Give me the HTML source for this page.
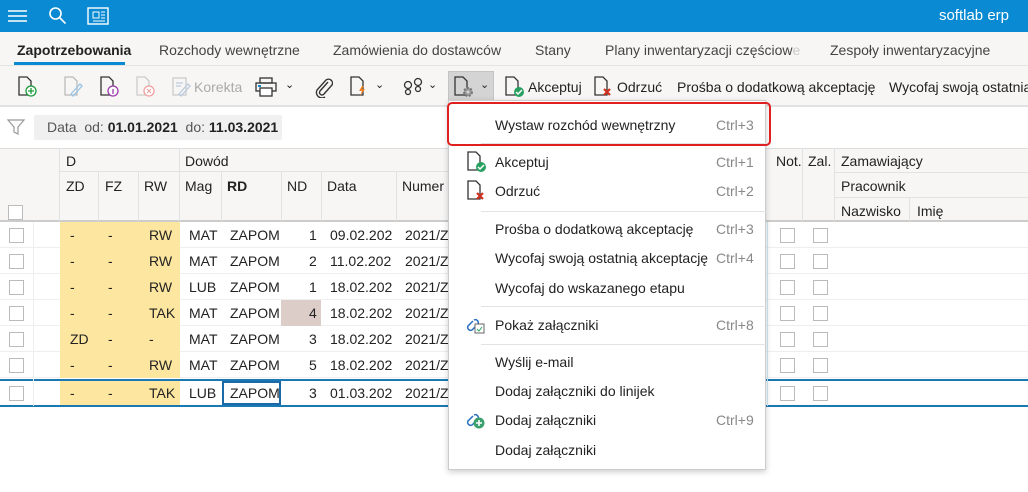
<!DOCTYPE html>
<html><head><meta charset="utf-8"><style>
*{box-sizing:border-box;margin:0;padding:0}
body{width:1028px;height:492px;overflow:hidden;background:#fff;font-family:"Liberation Sans",sans-serif;font-size:14px;color:#222;position:relative}
.a{position:absolute;white-space:nowrap}
.top{left:0;top:0;width:1028px;height:32px;background:#0a8ad2}
.tabs{left:0;top:32px;width:1028px;height:34px;background:#f7f6f5;border-bottom:1px solid #e4e4e4}
.tb{left:0;top:66px;width:1028px;height:41px;background:#f7f6f5;border-bottom:2px solid #e2e2e2}
.hd{left:0;top:148px;width:1028px;height:74px;background:#f7f6f5;border-top:1px solid #ddd;border-bottom:2px solid #ccc}
.cb{position:absolute;width:15px;height:15px;border:1px solid #bbb;background:#fff}
.row{position:absolute;left:0;width:1028px;height:26px;border-bottom:1px solid #eee}
.y{position:absolute;top:0;height:26px;background:#fde6a0}
.c{position:absolute;top:5px}
.menu{left:448px;top:100px;width:318px;height:370px;background:#fff;border:1px solid #ccc;box-shadow:0 2px 6px rgba(0,0,0,.2)}
.mi{position:absolute;left:46px}
.sc{position:absolute;left:267px;color:#888}
.sep{position:absolute;left:32px;width:286px;height:1px;background:#e3e3e3}
.vl{position:absolute;width:1px;background:#e2e2e2}
</style></head><body>
<div class="a top"></div>
<svg class="a" style="left:8px;top:8px" width="20" height="16"><path d="M0 3h19M0 8h19M0 13h19" stroke="#fff" stroke-width="1.6"/></svg>
<svg class="a" style="left:48px;top:6px" width="20" height="20"><circle cx="7.5" cy="7.5" r="5.5" stroke="#fff" stroke-width="1.6" fill="none"/><path d="M11.5 11.5l6 6" stroke="#fff" stroke-width="1.6"/></svg>
<svg class="a" style="left:87px;top:7px" width="22" height="18"><rect x="1" y="1" width="20" height="16" stroke="#fff" fill="none" stroke-width="1.4"/><rect x="6" y="5" width="6" height="6" stroke="#fff" fill="none"/><path d="M14 5h4M14 8h4M14 11h4M6 14h12" stroke="#fff"/></svg>
<div class="a" style="right:19px;top:7px;color:#fff;font-size:15px">softlab erp</div>

<div class="a tabs"></div>
<div class="a" style="left:17px;top:42px;font-weight:bold;color:#222">Zapotrzebowania</div>
<div class="a" style="left:14px;top:62px;width:111px;height:3px;background:#0a8ad2"></div>
<div class="a" style="left:159px;top:42px;color:#444">Rozchody wewnętrzne</div>
<div class="a" style="left:333px;top:42px;color:#444">Zamówienia do dostawców</div>
<div class="a" style="left:535px;top:42px;color:#444">Stany</div>
<div class="a" style="left:605px;top:42px;color:#444">Plany inwentaryzacji częściow<span style="color:#ccc">e</span></div>
<div class="a" style="left:830px;top:42px;color:#444">Zespoły inwentaryzacyjne</div>

<div class="a tb"></div>
<svg class="a" style="left:17px;top:76px" width="24" height="22"><path d="M2 1h8l4 4v14H2z" fill="none" stroke="#333" stroke-width="1.3"/><circle cx="14" cy="15" r="5" fill="#fff" stroke="#1a9a3a" stroke-width="1.3"/><path d="M14 12v6M11 15h6" stroke="#1a9a3a" stroke-width="1.3"/></svg>
<svg class="a" style="left:63px;top:76px" width="24" height="22"><path d="M2 1h8l4 4v14H2z" fill="none" stroke="#bbb" stroke-width="1.3"/><path d="M8 18l9-10 2 2-9 10z" fill="none" stroke="#9cc4e4" stroke-width="1.3"/></svg>
<svg class="a" style="left:99px;top:76px" width="24" height="22"><path d="M2 1h8l4 4v14H2z" fill="none" stroke="#333" stroke-width="1.3"/><circle cx="14" cy="15" r="5" fill="#fff" stroke="#9a3aaa" stroke-width="1.3"/><path d="M14 13v5" stroke="#9a3aaa" stroke-width="1.3"/></svg>
<svg class="a" style="left:135px;top:76px" width="24" height="22"><path d="M2 1h8l4 4v14H2z" fill="none" stroke="#ccc" stroke-width="1.3"/><circle cx="14" cy="15" r="5" fill="#fff" stroke="#f0a0a0" stroke-width="1.3"/><path d="M12 13l4 4M16 13l-4 4" stroke="#f0a0a0"/></svg>
<svg class="a" style="left:171px;top:76px" width="22" height="22"><rect x="2" y="2" width="13" height="17" fill="none" stroke="#ccc" stroke-width="1.3"/><path d="M5 7h7M5 10h5M8 18l9-10 2 2-9 10z" fill="none" stroke="#bcd" stroke-width="1.3"/></svg>
<div class="a" style="left:194px;top:79px;color:#aaa">Korekta</div>
<svg class="a" style="left:255px;top:77px" width="22" height="20"><rect x="5" y="1" width="12" height="5" fill="none" stroke="#333" stroke-width="1.3"/><rect x="1" y="6" width="20" height="8" fill="none" stroke="#333" stroke-width="1.3"/><rect x="5" y="11" width="12" height="8" fill="#fff" stroke="#333" stroke-width="1.3"/><path d="M3 9h3" stroke="#0a8ad2" stroke-width="2"/></svg>
<div class="a" style="left:285px;top:78px;font-size:11px">&#8964;</div>
<svg class="a" style="left:313px;top:76px" width="20" height="22"><path d="M15 6l-8 9a2.5 2.5 0 0 0 4 3l8-9a4 4 0 0 0-6-5l-9 10a5.5 5.5 0 0 0 8 7" fill="none" stroke="#333" stroke-width="1.4"/></svg>
<svg class="a" style="left:349px;top:76px" width="22" height="22"><path d="M2 1h8l4 4v14H2z" fill="none" stroke="#333" stroke-width="1.3"/><path d="M13 10l-3 5h3l-2 5 5-7h-3l2-3z" fill="#f08020"/></svg>
<div class="a" style="left:375px;top:78px;font-size:11px">&#8964;</div>
<svg class="a" style="left:402px;top:77px" width="24" height="20"><circle cx="6" cy="8" r="3.5" fill="none" stroke="#333" stroke-width="1.3"/><circle cx="6" cy="15" r="2.5" fill="none" stroke="#333" stroke-width="1.3"/><circle cx="16" cy="5" r="3.5" fill="none" stroke="#333" stroke-width="1.3"/><circle cx="16" cy="12" r="2.5" fill="none" stroke="#333" stroke-width="1.3"/></svg>
<div class="a" style="left:428px;top:78px;font-size:11px">&#8964;</div>
<div class="a" style="left:448px;top:71px;width:46px;height:30px;background:#d4d4d4;border:1px solid #c4c4c4"></div>
<svg class="a" style="left:453px;top:76px" width="24" height="22"><path d="M2 1h8l4 4v14H2z" fill="none" stroke="#333" stroke-width="1.3"/><circle cx="15" cy="16" r="4" fill="#999" stroke="#777" stroke-width="2" stroke-dasharray="2 1.5"/><circle cx="15" cy="16" r="1.5" fill="#d4d4d4"/></svg>
<div class="a" style="left:480px;top:78px;font-size:11px">&#8964;</div>
<svg class="a" style="left:504px;top:76px" width="22" height="22"><path d="M2 1h8l4 4v14H2z" fill="none" stroke="#333" stroke-width="1.3"/><circle cx="15" cy="16" r="5" fill="#27a060"/><path d="M12 16l2 2 4-4" stroke="#fff" stroke-width="1.5" fill="none"/></svg>
<div class="a" style="left:528px;top:79px">Akceptuj</div>
<svg class="a" style="left:593px;top:76px" width="22" height="22"><path d="M2 1h8l4 4v14H2z" fill="none" stroke="#333" stroke-width="1.3"/><path d="M11 13l6 6M17 13l-6 6" stroke="#d03020" stroke-width="2.2"/></svg>
<div class="a" style="left:617px;top:79px">Odrzuć</div>
<div class="a" style="left:677px;top:79px">Prośba o dodatkową akceptację</div>
<div class="a" style="left:889px;top:79px">Wycofaj swoją ostatnią</div>

<svg class="a" style="left:7px;top:118px" width="18" height="18"><path d="M1 2h16l-6 7v7l-4-2V9z" fill="none" stroke="#999" stroke-width="1.2"/></svg>
<div class="a" style="left:34px;top:115px;width:248px;height:25px;background:#f0f0f0;border-radius:2px"></div>
<div class="a" style="left:47px;top:119px;color:#555">Data &nbsp;od: <b style="color:#222">01.01.2021</b> &nbsp;do: <b style="color:#222">11.03.2021</b></div>

<div class="a hd"></div>
<div class="vl" style="left:59px;top:149px;height:72px"></div>
<div class="vl" style="left:179px;top:149px;height:72px"></div>
<div class="a" style="left:60px;top:171px;width:388px;height:1px;background:#e2e2e2"></div>
<div class="vl" style="left:98px;top:172px;height:49px"></div>
<div class="vl" style="left:138px;top:172px;height:49px"></div>
<div class="vl" style="left:221px;top:172px;height:49px"></div>
<div class="vl" style="left:281px;top:172px;height:49px"></div>
<div class="vl" style="left:321px;top:172px;height:49px"></div>
<div class="vl" style="left:396px;top:172px;height:49px"></div>
<div class="a" style="left:66px;top:153px">D</div>
<div class="a" style="left:185px;top:153px">Dowód</div>
<div class="a" style="left:66px;top:178px">ZD</div>
<div class="a" style="left:105px;top:178px">FZ</div>
<div class="a" style="left:144px;top:178px">RW</div>
<div class="a" style="left:185px;top:178px">Mag</div>
<div class="a" style="left:227px;top:178px;font-weight:bold">RD</div>
<div class="a" style="left:287px;top:178px">ND</div>
<div class="a" style="left:327px;top:178px">Data</div>
<div class="a" style="left:402px;top:178px">Numer</div>
<div class="cb" style="left:8px;top:205px"></div>
<div class="vl" style="left:802px;top:149px;height:72px"></div>
<div class="vl" style="left:834px;top:149px;height:72px"></div>
<div class="vl" style="left:909px;top:198px;height:23px"></div>
<div class="a" style="left:835px;top:172px;width:193px;height:1px;background:#e2e2e2"></div>
<div class="a" style="left:835px;top:197px;width:193px;height:1px;background:#e2e2e2"></div>
<div class="a" style="left:776px;top:153px">Not.</div>
<div class="a" style="left:808px;top:153px">Zal.</div>
<div class="a" style="left:841px;top:153px">Zamawiający</div>
<div class="a" style="left:841px;top:178px">Pracownik</div>
<div class="a" style="left:841px;top:203px">Nazwisko</div>
<div class="a" style="left:917px;top:203px">Imię</div>

<div class="row" style="top:222px"><div class="y" style="left:60px;width:120px"></div><div class="cb" style="left:9px;top:6px"></div><span class="c" style="left:70px">-</span><span class="c" style="left:108px">-</span><span class="c" style="left:149px">RW</span><span class="c" style="left:189px">MAT</span><span class="c" style="left:230px">ZAPOM</span><span class="c" style="left:309px">1</span><span class="c" style="left:330px">09.02.202</span><span class="c" style="left:405px">2021/Z</span><div class="cb" style="left:780px;top:6px"></div><div class="cb" style="left:813px;top:6px"></div></div>
<div class="row" style="top:248px"><div class="y" style="left:60px;width:120px"></div><div class="cb" style="left:9px;top:6px"></div><span class="c" style="left:70px">-</span><span class="c" style="left:108px">-</span><span class="c" style="left:149px">RW</span><span class="c" style="left:189px">MAT</span><span class="c" style="left:230px">ZAPOM</span><span class="c" style="left:309px">2</span><span class="c" style="left:330px">11.02.202</span><span class="c" style="left:405px">2021/Z</span><div class="cb" style="left:780px;top:6px"></div><div class="cb" style="left:813px;top:6px"></div></div>
<div class="row" style="top:274px"><div class="y" style="left:60px;width:120px"></div><div class="cb" style="left:9px;top:6px"></div><span class="c" style="left:70px">-</span><span class="c" style="left:108px">-</span><span class="c" style="left:149px">RW</span><span class="c" style="left:189px">LUB</span><span class="c" style="left:230px">ZAPOM</span><span class="c" style="left:309px">1</span><span class="c" style="left:330px">18.02.202</span><span class="c" style="left:405px">2021/Z</span><div class="cb" style="left:780px;top:6px"></div><div class="cb" style="left:813px;top:6px"></div></div>
<div class="row" style="top:300px"><div class="y" style="left:60px;width:120px"></div><div class="y" style="left:281px;width:40px;background:#dccdc8"></div><div class="cb" style="left:9px;top:6px"></div><span class="c" style="left:70px">-</span><span class="c" style="left:108px">-</span><span class="c" style="left:149px">TAK</span><span class="c" style="left:189px">MAT</span><span class="c" style="left:230px">ZAPOM</span><span class="c" style="left:309px">4</span><span class="c" style="left:330px">18.02.202</span><span class="c" style="left:405px">2021/Z</span><div class="cb" style="left:780px;top:6px"></div><div class="cb" style="left:813px;top:6px"></div></div>
<div class="row" style="top:326px"><div class="y" style="left:60px;width:120px"></div><div class="cb" style="left:9px;top:6px"></div><span class="c" style="left:70px">ZD</span><span class="c" style="left:108px">-</span><span class="c" style="left:149px">-</span><span class="c" style="left:189px">MAT</span><span class="c" style="left:230px">ZAPOM</span><span class="c" style="left:309px">3</span><span class="c" style="left:330px">18.02.202</span><span class="c" style="left:405px">2021/Z</span><div class="cb" style="left:780px;top:6px"></div><div class="cb" style="left:813px;top:6px"></div></div>
<div class="row" style="top:352px"><div class="y" style="left:60px;width:120px"></div><div class="cb" style="left:9px;top:6px"></div><span class="c" style="left:70px">-</span><span class="c" style="left:108px">-</span><span class="c" style="left:149px">RW</span><span class="c" style="left:189px">MAT</span><span class="c" style="left:230px">ZAPOM</span><span class="c" style="left:309px">5</span><span class="c" style="left:330px">18.02.202</span><span class="c" style="left:405px">2021/Z</span><div class="cb" style="left:780px;top:6px"></div><div class="cb" style="left:813px;top:6px"></div></div>
<div class="row" style="top:379px;height:28px;border-top:2px solid #1a78b4;border-bottom:2px solid #1a78b4"><div class="y" style="left:60px;width:120px;height:24px"></div><div style="position:absolute;left:222px;top:0;width:59px;height:24px;border:2px solid #1a6aa8"></div><div class="cb" style="left:9px;top:5px"></div><span class="c" style="left:70px;top:4px">-</span><span class="c" style="left:108px;top:4px">-</span><span class="c" style="left:149px;top:4px">TAK</span><span class="c" style="left:189px;top:4px">LUB</span><span class="c" style="left:230px;top:4px">ZAPOM</span><span class="c" style="left:309px;top:4px">3</span><span class="c" style="left:330px;top:4px">01.03.202</span><span class="c" style="left:405px;top:4px">2021/Z</span><div class="cb" style="left:780px;top:5px"></div><div class="cb" style="left:813px;top:5px"></div></div>
<div class="vl" style="left:33px;top:222px;height:184px;background:#eee"></div>
<div class="vl" style="left:767px;top:222px;height:184px;background:#cfe8f4"></div>

<div class="a menu">
<div class="mi" style="top:16px">Wystaw rozchód wewnętrzny</div><div class="sc" style="top:16px">Ctrl+3</div>
<div class="sep" style="top:42px"></div>
<svg style="position:absolute;left:17px;top:50px" width="22" height="22"><path d="M2 1h8l4 4v14H2z" fill="none" stroke="#333" stroke-width="1.3"/><circle cx="15" cy="16" r="5" fill="#27a060"/><path d="M12 16l2 2 4-4" stroke="#fff" stroke-width="1.5" fill="none"/></svg>
<div class="mi" style="top:53px">Akceptuj</div><div class="sc" style="top:53px">Ctrl+1</div>
<svg style="position:absolute;left:17px;top:79px" width="22" height="22"><path d="M2 1h8l4 4v14H2z" fill="none" stroke="#333" stroke-width="1.3"/><path d="M11 13l6 6M17 13l-6 6" stroke="#d03020" stroke-width="2.2"/></svg>
<div class="mi" style="top:82px">Odrzuć</div><div class="sc" style="top:82px">Ctrl+2</div>
<div class="sep" style="top:110px"></div>
<div class="mi" style="top:120px">Prośba o dodatkową akceptację</div><div class="sc" style="top:120px">Ctrl+3</div>
<div class="mi" style="top:149px">Wycofaj swoją ostatnią akceptację</div><div class="sc" style="top:149px">Ctrl+4</div>
<div class="mi" style="top:179px">Wycofaj do wskazanego etapu</div>
<div class="sep" style="top:205px"></div>
<svg style="position:absolute;left:15px;top:212px" width="22" height="22"><path d="M9 8l-5 5a3 3 0 0 0 4 4l6-6a3 3 0 0 0-4-4" fill="none" stroke="#2a70c0" stroke-width="1.5"/><rect x="11" y="11" width="9" height="9" fill="#fff" stroke="#666"/><path d="M13 16l2 2 3-4" stroke="#27a060" fill="none"/></svg>
<div class="mi" style="top:216px">Pokaż załączniki</div><div class="sc" style="top:216px">Ctrl+8</div>
<div class="sep" style="top:243px"></div>
<div class="mi" style="top:253px">Wyślij e-mail</div>
<div class="mi" style="top:282px">Dodaj załączniki do linijek</div>
<svg style="position:absolute;left:15px;top:307px" width="22" height="22"><path d="M9 8l-5 5a3 3 0 0 0 4 4l6-6a3 3 0 0 0-4-4" fill="none" stroke="#2a70c0" stroke-width="1.5"/><circle cx="15" cy="15" r="5.5" fill="#3aa070"/><path d="M15 12v6M12 15h6" stroke="#fff" stroke-width="1.6"/></svg>
<div class="mi" style="top:311px">Dodaj załączniki</div><div class="sc" style="top:311px">Ctrl+9</div>
<div class="mi" style="top:341px">Dodaj załączniki</div>
</div>
<div class="a" style="left:447px;top:102px;width:324px;height:44px;border:2px solid #e02020;border-radius:5px"></div>
</body></html>
